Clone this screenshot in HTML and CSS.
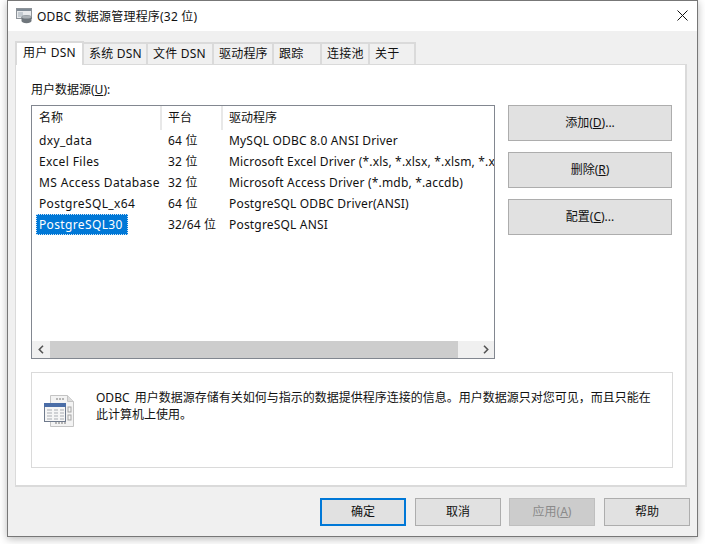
FILE: index.html
```html
<!DOCTYPE html>
<html lang="zh-CN">
<head>
<meta charset="utf-8">
<title>ODBC 数据源管理程序(32 位)</title>
<link rel="stylesheet" href="styles.css">
</head>
<body>
<div class="window">
  <header class="titlebar">
    <svg class="app-icon" width="16" height="16" viewBox="0 0 16 16">
      <rect x="0.5" y="0.5" width="15" height="10" fill="#e8eaec" stroke="#8d9399"/>
      <rect x="1" y="1" width="14" height="2" fill="#7f8a94"/>
      <rect x="2" y="4" width="5" height="5" fill="#c3cad0"/>
      <ellipse cx="10.5" cy="9" rx="5" ry="2" fill="#8b9298"/>
      <path d="M5.5 9v4c0 1.2 2.2 2.2 5 2.2s5-1 5-2.2V9z" fill="#6f767c"/>
      <ellipse cx="10.5" cy="9" rx="4.5" ry="1.6" fill="#aab0b5"/>
    </svg>
    <span class="title">ODBC 数据源管理程序(32 位)</span>
    <svg class="close" width="11" height="11" viewBox="0 0 11 11"><path d="M0.5 0.5l10 10M10.5 0.5l-10 10" stroke="#111" fill="none"/></svg>
  </header>
  <div class="content">
    <nav class="tabs">
      <div class="tab tab-active w69">用户 DSN</div>
      <div class="tab w64">系统 DSN</div>
      <div class="tab w66">文件 DSN</div>
      <div class="tab w60">驱动程序</div>
      <div class="tab w48">跟踪</div>
      <div class="tab w48">连接池</div>
      <div class="tab w46">关于</div>
    </nav>
    <section class="panel">
      <div class="upper">
        <div class="list-area">
          <div class="list-label">用户数据源(<u>U</u>):</div>
          <div class="listview">
            <div class="row head">
              <div class="c1">名称</div><div class="c2">平台</div><div class="c3">驱动程序</div>
            </div>
            <div class="rows">
              <div class="row"><div class="c1"><span class="name">dxy_data</span></div><div class="c2">64 位</div><div class="c3">MySQL ODBC 8.0 ANSI Driver</div></div>
              <div class="row"><div class="c1"><span class="name">Excel Files</span></div><div class="c2">32 位</div><div class="c3">Microsoft Excel Driver (*.xls, *.xlsx, *.xlsm, *.xlsb)</div></div>
              <div class="row"><div class="c1"><span class="name">MS Access Database</span></div><div class="c2">32 位</div><div class="c3">Microsoft Access Driver (*.mdb, *.accdb)</div></div>
              <div class="row"><div class="c1"><span class="name">PostgreSQL_x64</span></div><div class="c2">64 位</div><div class="c3">PostgreSQL ODBC Driver(ANSI)</div></div>
              <div class="row"><div class="c1"><span class="name selected">PostgreSQL30</span></div><div class="c2">32/64 位</div><div class="c3">PostgreSQL ANSI</div></div>
            </div>
            <div class="hscroll">
              <div class="arrow first"><svg width="8" height="9" viewBox="0 0 8 9"><path d="M6 0.8L2.3 4.5 6 8.2" stroke="#555" stroke-width="1.6" fill="none"/></svg></div>
              <div class="thumb"></div>
              <div class="track"></div>
              <div class="arrow"><svg width="8" height="9" viewBox="0 0 8 9"><path d="M2 0.8L5.7 4.5 2 8.2" stroke="#555" stroke-width="1.6" fill="none"/></svg></div>
            </div>
          </div>
        </div>
        <div class="side-buttons">
          <button class="btn side">添加(<u>D</u>)...</button>
          <button class="btn side">删除(<u>R</u>)</button>
          <button class="btn side">配置(<u>C</u>)...</button>
        </div>
      </div>
      <div class="info">
        <svg class="info-icon" width="32" height="34" viewBox="0 0 32 34">
          <path d="M6.5 0.5h17l6 6v25h-23z" fill="#f3f3f3" stroke="#c4c4c4"/>
          <path d="M23.5 0.5v6h6" fill="#dcdcdc" stroke="#c4c4c4"/>
          <path d="M12 4h8M11 28h12" stroke="#b5b5b5" stroke-dasharray="2 1" stroke-width="2"/>
          <rect x="24" y="12" width="3" height="5" fill="none" stroke="#a5a5a5"/>
          <rect x="24" y="20" width="3" height="5" fill="none" stroke="#a5a5a5"/>
          <rect x="0.5" y="8.5" width="21" height="18" fill="#f6f6f6" stroke="#6f7a8c"/>
          <rect x="0" y="8" width="22" height="4" fill="#4a6da7"/>
          <path d="M3 15h5M10 15h4M16 15h4M3 18h5M10 18h4M16 18h4M3 21h5M10 21h4M16 21h4M3 24h5M10 24h4M16 24h4" stroke="#a9adb3"/>
        </svg>
        <p class="info-text">ODBC 用户数据源存储有关如何与指示的数据提供程序连接的信息。用户数据源只对您可见，而且只能在此计算机上使用。</p>
      </div>
    </section>
    <footer class="footer">
      <button class="btn bottom default">确定</button>
      <button class="btn bottom">取消</button>
      <button class="btn bottom disabled">应用(<u>A</u>)</button>
      <button class="btn bottom">帮助</button>
    </footer>
  </div>
</div>
</body>
</html>
```
FILE: styles.css
```css
* { box-sizing: border-box; }
html, body { margin: 0; height: 100%; }
body {
  width: 705px;
  height: 544px;
  overflow: hidden;
  background: #fff;
  padding: 0 7px 7px 7px;
  font-family: "Noto Sans", "Noto Sans CJK SC", sans-serif;
  font-size: 12px;
  line-height: 17px;
  color: #111;
}
.window {
  width: 691px;
  height: 537px;
  border: 1px solid #777;
  background: #f0f0f0;
  box-shadow: 0 2px 8px rgba(0,0,0,.28);
  display: flex;
  flex-direction: column;
}
.titlebar {
  height: 30px;
  flex: none;
  background: #fff;
  display: flex;
  align-items: center;
  padding: 0 9px 0 8px;
}
.app-icon { margin-right: 5px; flex: none; }
.title { font-size: 12px; flex: 1; letter-spacing: .2px; }
.close { margin-bottom: 2px; flex: none; }
.content { flex: 1; padding: 10px 10px 9px 7px; display: flex; flex-direction: column; }
.tabs { display: flex; align-items: flex-end; height: 23px; position: relative; z-index: 1; }
.tab {
  height: 22px;
  padding: 1px 0 0 5px;
  border: 2px solid #dadada;
  border-left-width: 0;
  border-bottom-width: 0;
  background: #f0f0f0;
  letter-spacing: .2px;
}
.tab-active {
  height: 24px;
  margin-bottom: -1px;
  background: #fff;
  padding: 1px 0 0 6px;
  border-left-width: 2px;
  font-size: 12px;
}
.w69 { width: 69px; }
.w64 { width: 64px; }
.w66 { width: 66px; }
.w60 { width: 60px; }
.w48 { width: 48px; }
.w46 { width: 46px; }
.panel {
  width: 672px;
  height: 423px;
  background: #fff;
  border: 2px solid #dadada;
  border-width: 1px 2px 2px 1px;
  padding: 16px 14px 0 15px;
  display: flex;
  flex-direction: column;
}
.upper { display: flex; gap: 13px; }
.list-area { width: 464px; }
.list-label { height: 24px; }
.listview {
  height: 254px;
  border: 1px solid #828790;
  display: flex;
  flex-direction: column;
}
.row { display: flex; height: 21px; line-height: 21px; white-space: nowrap; overflow: hidden; }
.rows .row { letter-spacing: .18px; }
.rows .name { letter-spacing: .36px; }
.row .c1 { width: 130px; padding-left: 4px; flex: none; }
.row .c2 { width: 61px; padding-left: 6px; flex: none; }
.row .c3 { flex: 1; padding-left: 6px; overflow: hidden; }
.row.head { height: 24px; line-height: 24px; flex: none; }
.head .c1, .head .c2 { border-right: 2px solid #e8e8e8; }
.head .c1 { padding-left: 7px; }
.rows { flex: 1; }
.name { display: inline-block; padding: 0 2px; height: 21px; line-height: 19px; border: 1px solid transparent; }
.selected { background: #0078d7; color: #fff; border: 1px dotted #cfe4f7; padding-right: 4px; }
.hscroll { height: 17px; flex: none; display: flex; background: #f0f0f0; }
.arrow { width: 17px; flex: none; display: flex; align-items: center; justify-content: center; }
.arrow.first { width: 18px; }
.thumb { width: 408px; background: #cdcdcd; }
.track { flex: 1; }
.side-buttons { padding-top: 24px; display: flex; flex-direction: column; gap: 11px; }
.btn {
  font: inherit;
  color: #111;
  background: #e1e1e1;
  border: 1px solid #adadad;
  padding: 0 0 2px;
}
.side { width: 164px; height: 36px; }
.info {
  margin-top: 13px;
  width: 642px;
  height: 96px;
  border: 1px solid #dadada;
  display: flex;
  padding: 16px 18px 0 12px;
  gap: 20px;
}
.info-icon { flex: none; margin-top: 6px; }
.info-text { margin: 0; flex: 1; word-spacing: 2px; }
.footer { display: flex; justify-content: flex-end; gap: 9px; margin-top: 11px; width: 675px; }
.bottom { width: 86px; height: 28px; }
.default { border: 2px solid #0078d7; }
.disabled { background: #cccccc; color: #8a8a8a; border-color: #bfbfbf; margin-left: -1px; }
```
